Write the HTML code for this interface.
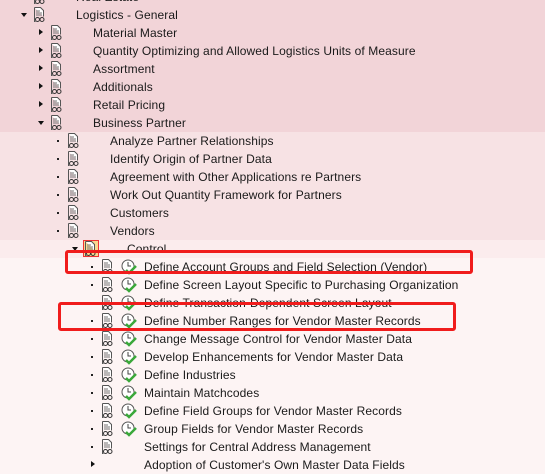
<!DOCTYPE html><html><head><style>
body{margin:0;width:545px;height:469px;overflow:hidden;background:#fdf4f4;font-family:"Liberation Sans",sans-serif;font-size:12px;letter-spacing:0.1px;color:#1a1a1a;position:relative}
.bg{position:absolute;left:0;width:545px}
.r{position:absolute;height:18px;line-height:18px;white-space:nowrap}
.r span{position:absolute;top:0}
.ar{position:absolute;width:0;height:0}
.rt{border-top:3.5px solid transparent;border-bottom:3.5px solid transparent;border-left:4px solid #111;top:5px}
.dn{border-left:3.5px solid transparent;border-right:3.5px solid transparent;border-top:4px solid #111;top:7px}
.bu{position:absolute;width:2px;height:2px;background:#222;top:8px}
svg{position:absolute;top:1px}
.box{position:absolute;border:3px solid #f01c1c;border-radius:3px}
</style></head><body>
<div class="bg" style="top:0;height:132px;background:#f2d4d8"></div>
<div class="bg" style="top:132px;height:108px;background:#f7e2e4"></div>
<div class="bg" style="top:240px;height:18px;background:#fbeced"></div>
<svg width="0" height="0" style="position:absolute"><defs>
<symbol id="d" viewBox="0 0 12 16"><path d="M1.5 .5h6l3 3v6M1.5 .5v14h1" fill="#fff" stroke="#555"/><path d="M3 4h4M3 6h6M3 8h6" stroke="#777"/><circle cx="4.5" cy="12.5" r="2" fill="none" stroke="#333"/><circle cx="9" cy="12.5" r="2" fill="none" stroke="#333"/><path d="M6.5 12h0.5" stroke="#333"/></symbol>
<symbol id="c" viewBox="0 0 16 16"><circle cx="7" cy="7" r="6" fill="#fff" stroke="#555"/><path d="M7 3v4h3" fill="none" stroke="#444"/><path d="M5 11l3 3 7-7" fill="none" stroke="#3aa83a" stroke-width="2.5"/></symbol>
</defs></svg>
<div id="t"></div>
<script>
var rows=[
[-3,1,'rt',"Real Estate"],
[15,1,'dn',"Logistics - General"],
[33,2,'rt',"Material Master"],[51,2,'rt',"Quantity Optimizing and Allowed Logistics Units of Measure"],[69,2,'rt',"Assortment"],[87,2,'rt',"Additionals"],[105,2,'rt',"Retail Pricing"],[123,2,'dn',"Business Partner"],
[141,3,'b',"Analyze Partner Relationships"],[159,3,'b',"Identify Origin of Partner Data"],[177,3,'b',"Agreement with Other Applications re Partners"],[195,3,'b',"Work Out Quantity Framework for Partners"],[213,3,'b',"Customers"],[231,3,'b',"Vendors"],
[249,4,'dn',"Control"],
[267,5,'bc',"Define Account Groups and Field Selection (Vendor)"],[285,5,'bc',"Define Screen Layout Specific to Purchasing Organization"],[303,5,'bc',"Define Transaction-Dependent Screen Layout"],[321,5,'bc',"Define Number Ranges for Vendor Master Records"],[339,5,'bc',"Change Message Control for Vendor Master Data"],[357,5,'bc',"Develop Enhancements for Vendor Master Data"],[375,5,'bc',"Define Industries"],[393,5,'bc',"Maintain Matchcodes"],[411,5,'bc',"Define Field Groups for Vendor Master Records"],[429,5,'bc',"Group Fields for Vendor Master Records"],[447,5,'b',"Settings for Central Address Management"],[465,5,'rt',"Adoption of Customer's Own Master Data Fields"]];
var h='';
rows.forEach(function(r){var y=r[0]-9,l=r[1],x=22+(l-1)*17;
h+='<div class="r" style="top:'+y+'px;left:0;width:545px">';
if(r[2]=='rt')h+='<div class="ar rt" style="left:'+(x+(l==5?1:0))+'px"></div>';
else if(r[2]=='dn')h+='<div class="ar dn" style="left:'+(x-1)+'px"></div>';
else h+='<div class="bu" style="left:'+(x+1)+'px"></div>';
var ix=x+11;
if(l==4)h+='<div style="position:absolute;left:'+(ix-1)+'px;top:0;width:16px;height:17px;background:#f8d890;border:1px solid #e33;box-sizing:border-box"></div>';
if(!(l==5&&r[2]=='rt'))h+='<svg width="12" height="16" style="left:'+ix+'px"><use href="#d"/></svg>';
if(r[2]=='bc')h+='<svg width="16" height="16" style="left:'+(ix+20)+'px"><use href="#c"/></svg>';
h+='<span style="left:'+(l==5?144:x+54)+'px">'+r[3]+'</span></div>';});
document.getElementById('t').innerHTML=h;
</script>
<div class="box" style="left:65px;top:250px;width:402px;height:18px"></div>
<div class="box" style="left:58px;top:302px;width:392px;height:23px"></div>
</body></html>
